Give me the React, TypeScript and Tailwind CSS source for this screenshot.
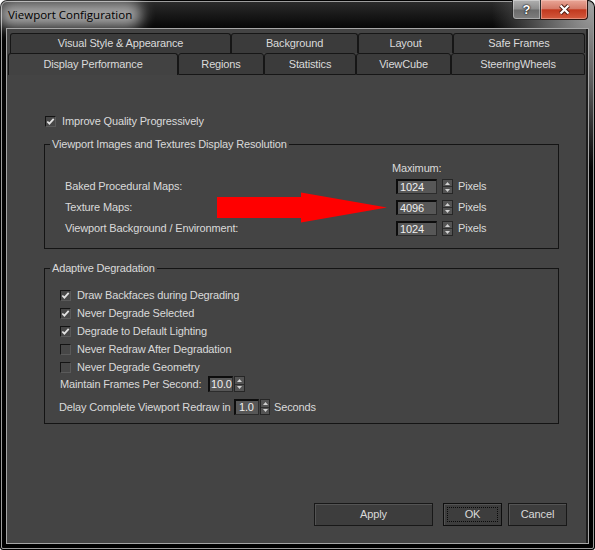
import React from "react";

function Check({ checked }: { checked?: boolean }) {
  return (
    <span className="flex h-[11px] w-[11px] shrink-0 items-center justify-center border border-t-[#141414] border-l-[#141414] border-r-[#5a5a5a] border-b-[#5a5a5a] bg-[#474747]">
      {checked && (
        <svg width="9" height="9" viewBox="0 0 9 9">
          <path d="M1.3 4.5 L3.4 6.7 L7.7 1.8" fill="none" stroke="#e2e2e2" strokeWidth="1.8" />
        </svg>
      )}
    </span>
  );
}

function Spin({ className }: { className: string }) {
  return (
    <span className={`flex shrink-0 flex-col border border-[#262626] bg-[#545454] ${className}`}>
      <span className="flex flex-1 items-center justify-center border-b border-[#2e2e2e]">
        <svg width="5" height="3" viewBox="0 0 5 3">
          <path d="M0 3 L2.5 0 L5 3 Z" fill="#d2d2d2" />
        </svg>
      </span>
      <span className="flex flex-1 items-center justify-center">
        <svg width="5" height="3" viewBox="0 0 5 3">
          <path d="M0 0 L5 0 L2.5 3 Z" fill="#d2d2d2" />
        </svg>
      </span>
    </span>
  );
}

function NumBox({ value, className }: { value: string; className: string }) {
  return (
    <span
      className={`flex shrink-0 items-center border-t-2 border-l-2 border-r border-b border-t-[#0d0d0d] border-l-[#0d0d0d] border-r-[#2c2c2c] border-b-[#2c2c2c] bg-[#575757] text-[#eeeeee] ${className}`}
    >
      {value}
    </span>
  );
}

const topTabs: [string, string][] = [
  ["Visual Style & Appearance", "w-[221px]"],
  ["Background", "w-[127px]"],
  ["Layout", "w-[95px]"],
  ["Safe Frames", "w-[132px]"],
];

const frontTabs: [string, string][] = [
  ["Regions", "w-[86px]"],
  ["Statistics", "w-[92px]"],
  ["ViewCube", "w-[95px]"],
  ["SteeringWheels", "w-[134px]"],
];

const resolutionRows = [
  ["Baked Procedural Maps:", "1024"],
  ["Texture Maps:", "4096"],
  ["Viewport Background / Environment:", "1024"],
];

const degradeRows: [string, boolean][] = [
  ["Draw Backfaces during Degrading", true],
  ["Never Degrade Selected", true],
  ["Degrade to Default Lighting", true],
  ["Never Redraw After Degradation", false],
  ["Never Degrade Geometry", false],
];

export default function App() {
  return (
    <div className="h-[550px] w-[595px] bg-white text-[11px] leading-[13px] tracking-[-0.15px] text-[#dadada] [font-family:'Liberation_Sans',Arial,sans-serif]">
      <div className="relative h-full w-full rounded-t-[7px] rounded-b-[3px] bg-black p-px">
        <div className="flex h-full w-full flex-col rounded-t-[6px] rounded-b-[2px] border border-[#9c9c9c] bg-[radial-gradient(110px_180px_at_100%_0%,#a3a3a3,#5c5c5c_45%,transparent_92%),linear-gradient(to_bottom,#2a2a2a,#060606_26px,#000)]">
          {/* caption */}
          <div className="flex h-[26px] shrink-0 items-center pl-[6px]">
            <div className="relative">
              <div className="absolute -inset-x-[10px] -inset-y-[6px] rounded-[12px] bg-white/60 blur-[7px]" />
              <span className="relative text-[11.5px] tracking-normal text-black [font-family:'Open_Sans',sans-serif]">
                Viewport Configuration
              </span>
            </div>
          </div>

          {/* client area */}
          <div className="relative mx-[4px] mb-[4px] flex flex-1 flex-col border border-[#a6a6a6] bg-[#444444] shadow-[inset_-2px_0_0_#1c1c1c]">
            {/* tab strip */}
            <div className="ml-[3px] mt-[4px] flex">
              {topTabs.map(([t, w]) => (
                <div
                  key={t}
                  className={`flex h-[20px] items-center justify-center rounded-t-[3px] border-x border-t border-[#161616] bg-[#3b3b3b] ${w}`}
                >
                  {t}
                </div>
              ))}
            </div>
            <div className="ml-[1px] flex">
              <div className="flex h-[22px] w-[170px] items-center justify-center rounded-t-[3px] border-x border-t border-[#161616] bg-[#424242]">
                Display Performance
              </div>
              {frontTabs.map(([t, w]) => (
                <div
                  key={t}
                  className={`flex h-[22px] items-center justify-center rounded-t-[3px] border border-[#161616] bg-[#3b3b3b] ${w}`}
                >
                  {t}
                </div>
              ))}
            </div>

            {/* page body */}
            <div className="flex flex-1 flex-col">
              <label className="ml-[38px] mt-[41px] flex h-[11px] items-center gap-[6px]">
                <Check checked />
                <span>Improve Quality Progressively</span>
              </label>

              <fieldset className="ml-[37px] mt-[10px] w-[515px] border border-[#141414] pb-[12px]">
                <legend className="ml-[5px] px-[2px] leading-[15px]">
                  Viewport Images and Textures Display Resolution
                </legend>
                <div className="pl-[347px] pt-[10px]">Maximum:</div>
                <div className="mt-[4px] flex flex-col gap-[6px] pl-[20px]">
                  {resolutionRows.map(([label, v]) => (
                    <div key={label} className="flex h-[15px] items-center">
                      <span className="w-[331px]">{label}</span>
                      <NumBox value={v} className="h-[15px] w-[41px] pl-[2px]" />
                      <Spin className="ml-[5px] h-[15px] w-[11px]" />
                      <span className="ml-[5px]">Pixels</span>
                    </div>
                  ))}
                </div>
              </fieldset>

              <fieldset className="ml-[37px] mt-[12px] w-[515px] border border-[#141414] pb-[8px]">
                <legend className="ml-[5px] px-[2px] leading-[15px]">Adaptive Degradation</legend>
                <div className="flex flex-col pl-[15px] pt-[10px]">
                  {degradeRows.map(([label, on]) => (
                    <label key={label} className="flex h-[18px] items-center gap-[6px]">
                      <Check checked={on} />
                      <span>{label}</span>
                    </label>
                  ))}
                  <div className="flex h-[16px] items-center">
                    <span className="w-[148px]">Maintain Frames Per Second:</span>
                    <NumBox value="10.0" className="h-[16px] w-[25px] pl-[1px]" />
                    <Spin className="ml-[1px] h-[16px] w-[11px]" />
                  </div>
                  <div className="-ml-[1px] mt-[7px] flex h-[16px] items-center">
                    <span className="w-[175px]">Delay Complete Viewport Redraw in</span>
                    <NumBox value="1.0" className="h-[16px] w-[25px] pl-[3px]" />
                    <Spin className="ml-[1px] h-[16px] w-[10px]" />
                    <span className="ml-[4px]">Seconds</span>
                  </div>
                </div>
              </fieldset>

              <div className="flex-1" />

              <div className="flex justify-end pb-[17px] pr-[21px]">
                <button className="h-[23px] w-[119px] border border-[#181818] bg-[#3d3d3d] shadow-[inset_1px_1px_0_#545454]">
                  Apply
                </button>
                <button className="ml-[10px] flex h-[23px] w-[59px] border border-[#0e0e0e] bg-[#3d3d3d] p-[3px] shadow-[inset_1px_1px_0_#545454]">
                  <span className="flex flex-1 items-center justify-center border border-dotted border-[#0a0a0a]">
                    OK
                  </span>
                </button>
                <button className="ml-[6px] h-[23px] w-[59px] border border-[#181818] bg-[#3d3d3d] shadow-[inset_1px_1px_0_#545454]">
                  Cancel
                </button>
              </div>
            </div>

            {/* red pointer arrow */}
            <svg
              className="absolute left-[209px] top-[162px]"
              width="172"
              height="33"
              viewBox="0 0 172 33"
            >
              <polygon points="1,6 85,6 85,1.5 171,16.5 85,31.5 85,27 1,27" fill="#ff0000" />
            </svg>
          </div>
        </div>

        {/* caption buttons */}
        <div className="absolute right-[7px] top-0 flex">
          <div className="flex h-[20px] w-[29px] items-center justify-center rounded-bl-[4px] border border-t-0 border-[#2a2a2a] bg-[linear-gradient(to_bottom,#b0b0b0_0%,#8c8c8c_48%,#6a6a6a_52%,#7e7e7e_100%)] shadow-[inset_0_0_0_1px_rgba(255,255,255,0.35)]">
            <span className="text-[13px] font-bold leading-none tracking-normal text-white [text-shadow:0_0_2px_#000,0_0_1px_#000]">
              ?
            </span>
          </div>
          <div className="flex h-[20px] w-[47px] items-center justify-center rounded-br-[4px] border border-l-0 border-t-0 border-[#2a1510] bg-[linear-gradient(to_bottom,#e9a697_0%,#d57b69_45%,#c1391f_52%,#d35a3e_100%)] shadow-[inset_0_0_0_1px_rgba(255,220,210,0.4)]">
            <svg width="13" height="11" viewBox="0 0 13 11">
              <path d="M2.5 1.5 L10.5 9.5 M10.5 1.5 L2.5 9.5" stroke="#4a1a10" strokeWidth="4" />
              <path d="M2.5 1.5 L10.5 9.5 M10.5 1.5 L2.5 9.5" stroke="#ffffff" strokeWidth="2.2" />
            </svg>
          </div>
        </div>
      </div>
    </div>
  );
}
